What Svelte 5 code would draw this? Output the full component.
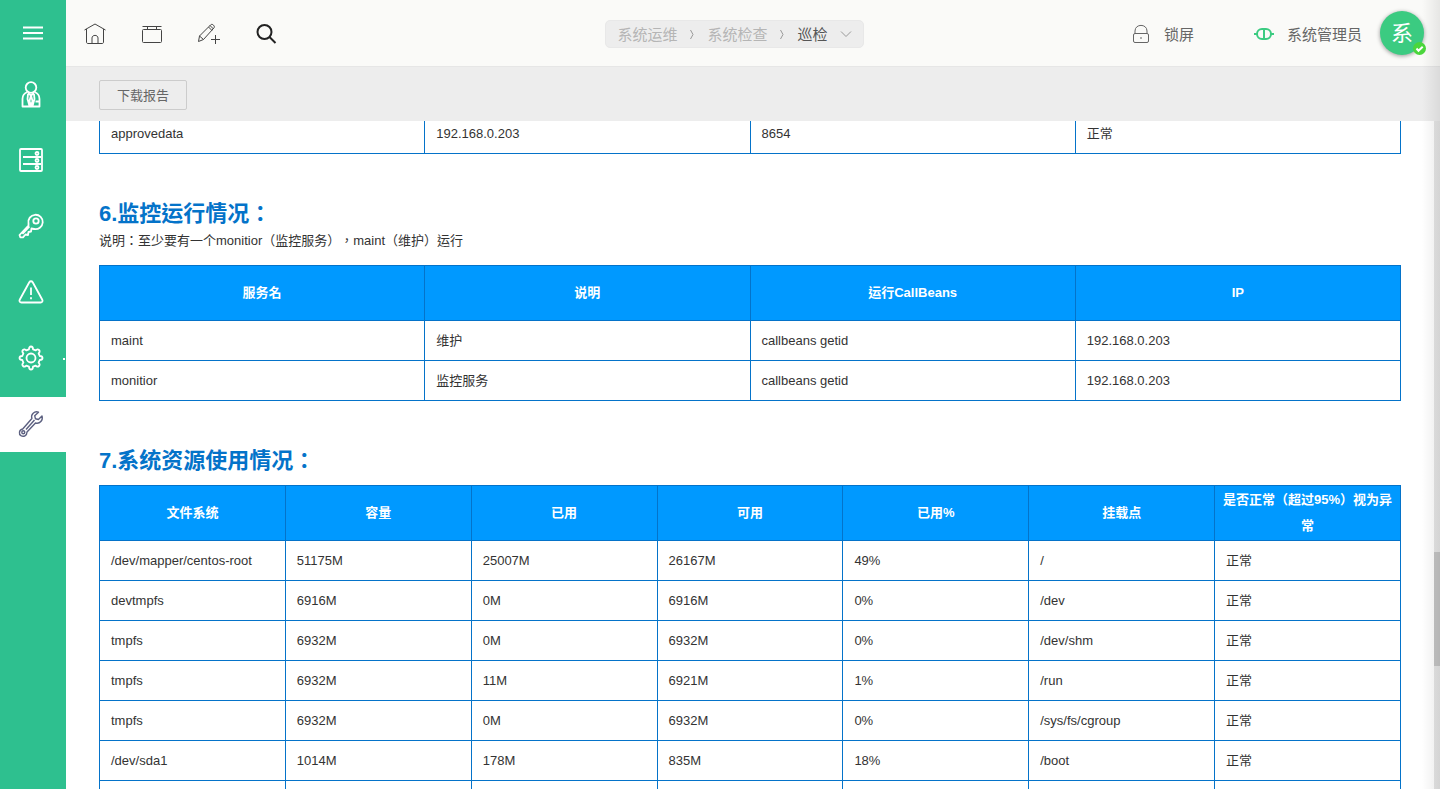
<script>
	const crumbs = ["系统运维", "系统检查"];
	const callRows = [["approvedata", "192.168.0.203", "8654", "正常"]];
	const serviceHeads = ["服务名", "说明", "运行CallBeans", "IP"];
	const serviceRows = [
		["maint", "维护", "callbeans getid", "192.168.0.203"],
		["monitior", "监控服务", "callbeans getid", "192.168.0.203"]
	];
	const diskHeads = ["文件系统", "容量", "已用", "可用", "已用%", "挂载点", "是否正常（超过95%）视为异常"];
	const diskRows = [
		["/dev/mapper/centos-root", "51175M", "25007M", "26167M", "49%", "/", "正常"],
		["devtmpfs", "6916M", "0M", "6916M", "0%", "/dev", "正常"],
		["tmpfs", "6932M", "0M", "6932M", "0%", "/dev/shm", "正常"],
		["tmpfs", "6932M", "11M", "6921M", "1%", "/run", "正常"],
		["tmpfs", "6932M", "0M", "6932M", "0%", "/sys/fs/cgroup", "正常"],
		["/dev/sda1", "1014M", "178M", "835M", "18%", "/boot", "正常"],
		["", "", "", "", "", "", ""]
	];
</script>

{#snippet grid(heads, rows)}
	<table>
		{#if heads.length}
			<thead>
				<tr>
					{#each heads as head}
						<th>{head}</th>
					{/each}
				</tr>
			</thead>
		{/if}
		<tbody>
			{#each rows as row}
				<tr>
					{#each row as cell}
						<td>{cell}</td>
					{/each}
				</tr>
			{/each}
		</tbody>
	</table>
{/snippet}

<div class="app">
	<aside>
		<button class="toggle" aria-label="菜单">
			<svg width="20" height="14" viewBox="0 0 20 14"><path d="M0 1.500h20M0 7h20M0 12.500h20" /></svg>
		</button>
		<button class="item" aria-label="用户">
			<svg width="26" height="28" viewBox="0 0 26 28">
				<circle cx="13" cy="7.500" r="5.300" />
				<path d="M9.500 12C6.500 13 4.500 15.500 4.500 19v7.500h17V19c0-3.500-2-6-5-7M10 13l3 2.500 3-2.500M13 15.500 11.500 21l1.500 5 1.500-5zM10 14l-.5 5 2 7M16 14l.5 5-2 7M17.500 21.500h3.500" />
			</svg>
		</button>
		<button class="item" aria-label="服务器">
			<svg width="26" height="26" viewBox="0 0 26 26">
				<rect x="2" y="2" width="22" height="22" rx="1" />
				<path d="M5 10h18M5 17h18" />
				<circle cx="19" cy="6.500" r="1.500" /><circle cx="19" cy="13.500" r="1.500" /><circle cx="19" cy="20.500" r="1.500" />
			</svg>
		</button>
		<button class="item" aria-label="密钥">
			<svg width="26" height="26" viewBox="0 0 26 26">
				<path d="M10.500 10.500A7.200 7.200 0 1 1 16 16l-2.500-.5-.5 3-2.500.5-.5 3-2.500-.5L5 24.300H2.300L1.500 22 10.500 12.500zM11.500 13.500l-7 7.500" />
				<circle cx="18" cy="8" r="2.700" />
			</svg>
		</button>
		<button class="item" aria-label="告警">
			<svg width="26" height="26" viewBox="0 0 26 26">
				<path d="M11.300 3.200c.8-1.300 2.600-1.300 3.400 0l9.600 17.500c.7 1.300-.1 2.800-1.700 2.800H3.400c-1.600 0-2.400-1.500-1.700-2.800zM13 8.500V16M13 18.300v2" />
			</svg>
		</button>
		<button class="item more" aria-label="设置">
			<svg width="26" height="26" viewBox="0 0 26 26">
				<path d="M11 4.300Q11 1.500 13 1.500T15 4.300l2.700 1.100Q19.500 3.500 21 5t-.4 3.300L21.700 11q2.800 0 2.800 2t-2.800 2l-1.100 2.700Q22.500 19.500 21 21t-3.300-.4L15 21.700q0 2.800-2 2.800t-2-2.800l-2.700-1.100Q6.500 22.500 5 21t.4-3.300L4.300 15q-2.800 0-2.800-2t2.800-2l1.100-2.700Q3.500 6.500 5 5t3.300.4z" />
				<circle cx="13" cy="13" r="4.500" />
			</svg>
		</button>
		<button class="item active" aria-label="系统运维">
			<svg width="26" height="28" viewBox="0 0 26 28">
				<path d="M20.500 2.200c-4-1.500-8 2-6.600 6.300L4.700 19c-3.800.8-4.200 5-1.700 6.700 2.500 1.500 6 0 6-3.700L17.500 13c4.300 1.200 7.800-2.600 6.500-7l-3.600 3.500-3-.8-.7-3z" />
				<path d="M8 19.500l8.500-9.500" />
				<circle cx="5.300" cy="22.300" r="1.500" />
			</svg>
		</button>
	</aside>
	<div class="main">
		<header>
			<nav>
				<button aria-label="首页">
					<svg width="24" height="24" viewBox="0 0 24 24"><path d="M1.500 8 12 2l10.500 6M3.500 7v13c0 1 .5 1.500 1.500 1.500h14c1 0 1.500-.5 1.500-1.500V7M9 21.500V16c0-3.500 6-3.500 6 0v5.500" /></svg>
				</button>
				<button aria-label="窗口">
					<svg width="24" height="24" viewBox="0 0 24 24"><path d="M2.500 4.500h19M7.500 4.500v3M16.500 4.500v3" /><rect x="2.500" y="7.500" width="19" height="13" rx="1" /></svg>
				</button>
				<button aria-label="新建">
					<svg width="24" height="24" viewBox="0 0 24 24"><path d="M1.500 19.500 2.500 14 13.500 3c1-1 2-.8 3 .2s1.200 2 .2 3L6.500 17.500zM2.500 14l4 3.500M11.500 5l3.500 3.500M13 3.500l3.500 3.500M14 17.500h9M18.500 13v9" /></svg>
				</button>
				<button class="find" aria-label="搜索">
					<svg width="24" height="24" viewBox="0 0 24 24"><circle cx="10.500" cy="10" r="7" /><path d="M15.500 15l6 6" /></svg>
				</button>
			</nav>
			<div class="crumbs">
				{#each crumbs as crumb}
					<a href="#top">{crumb}</a>
					<svg width="6" height="12" viewBox="0 0 6 12"><path d="M1.500 2 4 6.500 1.500 11" /></svg>
				{/each}
				<button>巡检 <svg width="12" height="8" viewBox="0 0 12 8"><path d="M1 1.500l5 5 5-5" /></svg></button>
			</div>
			<button class="lock">
				<svg width="20" height="22" viewBox="0 0 20 22"><rect x="2.500" y="10.500" width="15" height="9" rx="1.500" /><path d="M4 10.500V8c0-7.500 12-7.500 12 0v2.500M10 14v2" /></svg>
				锁屏
			</button>
			<button class="role">
				<svg width="22" height="12" viewBox="0 0 22 12"><rect x="4" y="1" width="14" height="10" rx="5" /><path d="M11 2v8M1 6h3M18 6h3" /></svg>
				系统管理员
			</button>
			<button class="avatar" aria-label="账号">
				<span>系</span>
				<svg class="badge" width="13" height="13" viewBox="0 0 13 13"><circle cx="6.500" cy="6.500" r="6.500" /><path d="M3.500 6.500l2 2.200 4.200-4" /></svg>
			</button>
		</header>
		<div class="toolbar"><button>下载报告</button></div>
		<div class="view">
			<div class="report">
				{@render grid([], callRows)}
				<h2>6.监控运行情况：</h2>
				<p>说明：至少要有一个monitior（监控服务），maint（维护）运行</p>
				{@render grid(serviceHeads, serviceRows)}
				<h2>7.系统资源使用情况：</h2>
				{@render grid(diskHeads, diskRows)}
			</div>
			<div class="track"><div class="thumb"></div></div>
		</div>
	</div>
	<div class="edge"></div>
</div>

<style>
	:global(body) {
		margin: 0;
		font-family: "Liberation Sans", "Noto Sans CJK SC", sans-serif;
		font-size: 13px;
		color: #333;
	}
	button {
		display: flex;
		align-items: center;
		padding: 0;
		border: 0;
		background: none;
		font: inherit;
		color: inherit;
		cursor: pointer;
	}
	svg {
		fill: none;
		stroke: currentColor;
		flex: none;
	}
	.app {
		position: relative;
		display: flex;
		height: 100vh;
		overflow: hidden;
	}
	aside {
		width: 66px;
		flex: none;
		display: flex;
		flex-direction: column;
		gap: 11px;
		background: #2ec08f;
		color: #fff;
	}
	.toggle {
		justify-content: center;
		height: 67px;
		margin-bottom: -11px;
		padding-bottom: 1px;
		stroke-width: 2;
	}
	.item {
		position: relative;
		justify-content: center;
		height: 55px;
		padding: 0 5px 1px 0;
	}
	.item svg {
		stroke-width: 1.8;
		stroke-linejoin: round;
	}
	.more::after {
		content: "";
		position: absolute;
		right: 1px;
		top: 27px;
		width: 2px;
		height: 2px;
		background: #fff;
	}
	.active {
		background: #fff;
		color: #5c6080;
	}
	.active svg {
		stroke-width: 1.4;
	}
	.main {
		flex: 1;
		min-width: 0;
		display: flex;
		flex-direction: column;
	}
	header {
		display: flex;
		align-items: center;
		height: 66px;
		flex: none;
		padding: 0 16px;
		border-bottom: 1px solid #e6e6e6;
		background: #fafaf8;
		font-size: 15px;
		color: #666;
	}
	nav {
		display: flex;
		gap: 33px;
		padding: 2px 60px 0 1px;
		color: #444;
	}
	.find {
		color: #222;
		stroke-width: 2;
	}
	.crumbs {
		display: flex;
		align-items: center;
		gap: 12px;
		height: 24px;
		margin: 2px auto 0;
		padding: 0 11px 2px;
		border: 1px solid #e8e8e8;
		border-radius: 5px;
		background: #ededed;
		color: #999;
	}
	.crumbs a {
		color: #b5b5b5;
		text-decoration: none;
	}
	.crumbs svg {
		margin-top: 2px;
	}
	.crumbs button {
		gap: 12px;
		color: #555;
	}
	.crumbs button svg {
		color: #999;
	}
	.lock {
		gap: 13px;
		margin-right: 59px;
	}
	.role {
		gap: 12px;
		margin-right: 18px;
	}
	.lock svg, .role svg {
		margin-top: 2px;
	}
	.role svg {
		color: #3bcb81;
		stroke-width: 2;
	}
	.avatar {
		position: relative;
		justify-content: center;
		width: 44px;
		height: 44px;
		border-radius: 50%;
		background: #3bcb81;
		box-shadow: 0 1px 4px rgba(0, 0, 0, 0.4);
		color: #fff;
		font-size: 22px;
	}
	.avatar span {
		padding-bottom: 4px;
	}
	.badge {
		position: absolute;
		right: -2px;
		bottom: 0;
		stroke-width: 2;
	}
	.badge circle {
		fill: #4bd63c;
		stroke: none;
	}
	.toolbar {
		display: flex;
		align-items: center;
		height: 54px;
		flex: none;
		padding: 1px 33px 0;
		box-sizing: border-box;
		background: #ededed;
	}
	.toolbar button {
		height: 30px;
		padding: 0 17px;
		border: 1px solid #ccc;
		border-radius: 2px;
		color: #666;
	}
	.view {
		position: relative;
		flex: 1;
		min-height: 0;
		overflow: hidden;
		background: #fff;
	}
	.report {
		margin-top: -8px;
		padding: 0 39px 0 33px;
		font-family: "Liberation Sans", "Noto Sans CJK TC", sans-serif;
		text-spacing-trim: space-all;
	}
	h2 {
		margin: 45px 0 9px;
		font-size: 22px;
		line-height: 30px;
		color: #0473c9;
	}
	p {
		margin: -9px 0 12px;
		line-height: 24px;
	}
	table {
		width: 100%;
		table-layout: fixed;
		border-collapse: collapse;
	}
	th, td {
		box-sizing: border-box;
		border: 1px solid #0473c9;
		line-height: 26px;
	}
	th {
		height: 55px;
		padding: 0 5px;
		background: #09f;
		color: #fff;
	}
	td {
		height: 40px;
		padding: 0 11px;
		text-align: left;
	}
	.track {
		position: absolute;
		top: 0;
		right: 0;
		bottom: 0;
		width: 6px;
		background: #e6e6e6;
	}
	.thumb {
		height: 17%;
		margin-top: 431px;
		background: #c5c5c5;
	}
	.edge {
		position: absolute;
		top: 0;
		right: 0;
		bottom: 0;
		width: 18px;
		background: linear-gradient(to right, transparent, rgba(0, 0, 0, 0.08));
		pointer-events: none;
	}
</style>
